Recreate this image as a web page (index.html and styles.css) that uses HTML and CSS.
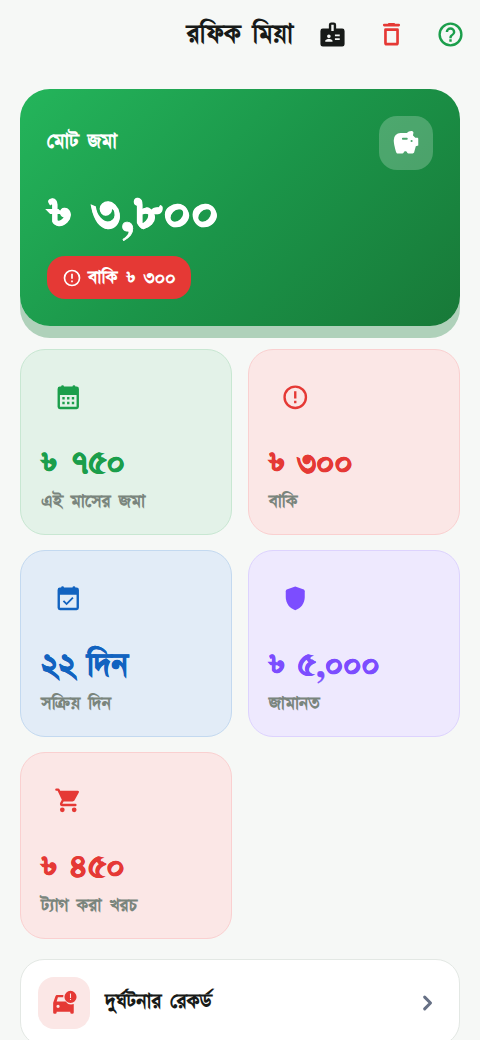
FILE: index.html
```html
<!DOCTYPE html>
<html lang="bn">
<head>
<meta charset="utf-8">
<title>রফিক মিয়া</title>
<link rel="stylesheet" href="styles.css">
</head>
<body>
<header class="topbar">
  <h1 class="name">রফিক মিয়া</h1>
  <svg class="icon badge-icon" viewBox="0 0 24 24" fill="#171a18"><path fill-rule="evenodd" d="M20 7h-5V4a2 2 0 0 0-2-2h-2a2 2 0 0 0-2 2v3H4a2 2 0 0 0-2 2v11a2 2 0 0 0 2 2h16a2 2 0 0 0 2-2V9a2 2 0 0 0-2-2zM11 4h2v5h-2zM9 12a1.500 1.500 0 1 1 0 3 1.500 1.500 0 0 1 0-3zM12 18H6v-.75c0-1 2-1.500 3-1.500s3 .5 3 1.500zM18 16.500h-4V15h4zM18 13.500h-4V12h4z"/></svg>
  <svg class="icon" viewBox="0 0 24 24" fill="none" stroke="#e53935" stroke-width="2.200" stroke-linejoin="round" stroke-linecap="round"><path d="M7 8h10v11a1 1 0 0 1-1 1H8a1 1 0 0 1-1-1z"/><path d="M6 4.200h12M10 3.600h4"/></svg>
  <svg class="icon" viewBox="0 0 24 24" fill="#1b9e4b"><path d="M11 18h2v-2h-2v2zm1-16a10 10 0 1 0 0 20 10 10 0 0 0 0-20zm0 18a8 8 0 1 1 0-16 8 8 0 0 1 0 16zm0-14a4 4 0 0 0-4 4h2a2 2 0 1 1 4 0c0 2-3 1.750-3 5h2c0-2.250 3-2.500 3-5a4 4 0 0 0-4-4z"/></svg>
</header>
<main>
  <section class="hero">
    <div class="hero-head">
      <span class="hero-label">মোট জমা</span>
      <span class="hero-icon"><svg viewBox="0 0 24 24" fill="#fff"><path fill-rule="evenodd" d="M22 7.500h-2L18 5.500c0-.5.100-1 .200-1.500A1.500 1.500 0 0 0 16.500 1.800 5 5 0 0 0 12.700 3.500H7.500A5.800 5.800 0 0 0 1.500 9.600c0 3.400 1.500 8.300 2.100 10.300.2.700.7 1.100 1.400 1.100h4a1.300 1.300 0 0 0 1.200-1.200l.8-.8h1l.8.8a1.300 1.300 0 0 0 1.200 1.200h3.700c.6 0 1.100-.4 1.300-1l1.400-5.200 2.100-.7V8.500a1 1 0 0 0-.5-1zM12.700 9.200H9.300a.8.800 0 0 1 0-1.600h3.400a.8.800 0 0 1 0 1.600zm4.100 2a.9.900 0 1 1 0-1.800.9.900 0 0 1 0 1.800z"/></svg></span>
    </div>
    <div class="hero-amount">৳ ৩,৮০০</div>
    <div class="due"><svg viewBox="0 0 24 24" fill="#fff"><path d="M11 15h2v2h-2zm0-8h2v6h-2zm1-5a10 10 0 1 0 0 20 10 10 0 0 0 0-20zm0 18a8 8 0 1 1 0-16 8 8 0 0 1 0 16z"/></svg><span>বাকি ৳ ৩০০</span></div>
  </section>
  <section class="grid">
    <article class="card green">
      <svg class="icon" viewBox="0 0 24 24" fill="currentColor"><path fill-rule="evenodd" d="M19 3h-1a1.200 1.200 0 0 0-2.400 0H8.400A1.200 1.200 0 0 0 6 3H5a2 2 0 0 0-2 2v15a2 2 0 0 0 2 2h14a2 2 0 0 0 2-2V5a2 2 0 0 0-2-2zm0 17H5V10h14zM7 11.800h2v2H7zm4 0h2v2h-2zm4 0h2v2h-2zm-8 4h2v2H7zm4 0h2v2h-2zm4 0h2v2h-2z"/></svg>
      <strong class="amount">৳ ৭৫০</strong><span>এই মাসের জমা</span>
    </article>
    <article class="card red">
      <svg class="icon" viewBox="0 0 24 24" fill="currentColor"><path d="M11 15h2v2h-2zm0-8h2v6h-2zm1-5a10 10 0 1 0 0 20 10 10 0 0 0 0-20zm0 18a8 8 0 1 1 0-16 8 8 0 0 1 0 16z"/></svg>
      <strong class="amount">৳ ৩০০</strong><span>বাকি</span>
    </article>
    <article class="card blue">
      <svg class="icon" viewBox="0 0 24 24" fill="currentColor"><path fill-rule="evenodd" d="M19 3h-1a1.200 1.200 0 0 0-2.400 0H8.400A1.200 1.200 0 0 0 6 3H5a2 2 0 0 0-2 2v15a2 2 0 0 0 2 2h14a2 2 0 0 0 2-2V5a2 2 0 0 0-2-2zm0 17H5V9h14zm-8.400-2.100 5.900-5.900-1.100-1.100-4.800 4.800-2.100-2.100-1.100 1.100z"/></svg>
      <strong>২২ দিন</strong><span>সক্রিয় দিন</span>
    </article>
    <article class="card purple">
      <svg class="icon" viewBox="0 0 24 24" fill="currentColor"><path d="M12 2 4.800 4.600Q4 5 4 6v5c0 5.500 3.400 9.700 8 11 4.600-1.300 8-5.500 8-11V6q0-1-.8-1.400z"/></svg>
      <strong class="amount">৳ ৫,০০০</strong><span>জামানত</span>
    </article>
    <article class="card red">
      <svg class="icon" viewBox="0 0 24 24" fill="currentColor"><path d="M7 18a2 2 0 1 0 0 4 2 2 0 0 0 0-4zm10 0a2 2 0 1 0 0 4 2 2 0 0 0 0-4zM1 3a1 1 0 0 0 1 1h1l3.600 7.600-1.350 2.400C4.500 15.400 5.500 17 7 17h11a1 1 0 0 0 0-2H7l1.100-2h7.500c.7 0 1.400-.4 1.700-1l3.600-6.500A1 1 0 0 0 20 4H5.200l-.7-1.400A1 1 0 0 0 3.600 2H2a1 1 0 0 0-1 1z"/></svg>
      <strong class="amount">৳ ৪৫০</strong><span>ট্যাগ করা খরচ</span>
    </article>
  </section>
  <section class="record">
    <span class="record-icon"><svg viewBox="0 0 24 24" fill="#e53935"><path fill-rule="evenodd" d="M11.500 4.500H5.800c-.8 0-1.400.5-1.700 1.200L2 11.800v8.900a1.300 1.300 0 0 0 1.300 1.300h.6a1.300 1.300 0 0 0 1.300-1.300V20h12.600v.7a1.300 1.300 0 0 0 1.300 1.300h.6a1.300 1.300 0 0 0 1.300-1.300V13a6.500 6.500 0 0 1-7.500-2.500H5.200l1.200-3.700h4.900c0-.8 0-1.600.2-2.300zM6.500 16.500a1.500 1.500 0 1 1 0-3 1.500 1.500 0 0 1 0 3z"/><path fill-rule="evenodd" d="M18 .8a5.600 5.600 0 1 0 0 11.200A5.600 5.600 0 0 0 18 .8zm-.5 2.500h1v4h-1zm0 5h1v1h-1z"/></svg></span>
    <span class="record-label">দুর্ঘটনার রেকর্ড</span>
    <svg class="chevron" viewBox="0 0 24 24" fill="none" stroke="#667085" stroke-width="2.600" stroke-linecap="round" stroke-linejoin="round"><path d="m10 7 5 5-5 5"/></svg>
  </section>
</main>
</body>
</html>
```
FILE: styles.css
```css
* { box-sizing: border-box; }
body {
  margin: 0;
  height: 1040px;
  overflow: hidden;
  background: #f6f8f6;
  font-family: "FreeSerif", monospace;
  white-space: nowrap;
}
svg { display: block; flex: none; }
.topbar { display: flex; align-items: center; justify-content: flex-end; height: 69px; padding-right: 15px; }
.topbar .icon { width: 29px; height: 29px; margin-left: 30px; }
.topbar .badge-icon { margin-left: 25px; }
.name { margin: 0; font-size: 30px; font-weight: 700; color: #171a18; line-height: 40px; word-spacing: 4px; }
main { padding: 20px 20px 0; }
.hero {
  height: 237px;
  padding: 27px;
  border-radius: 30px;
  background: linear-gradient(135deg, #24b55b, #1b9549 50%, #187938);
  box-shadow: 0 12px 0 #afd1ba;
  color: #fff;
}
.hero-head { display: flex; justify-content: space-between; height: 54px; }
.hero-label { font-size: 23px; font-weight: 700; line-height: 53px; word-spacing: 3px; }
.hero-icon { width: 54px; height: 54px; padding: 13px; border-radius: 18px; background: rgba(255,255,255,.22); }
.hero-icon svg { width: 28px; height: 28px; }
.hero-amount { height: 86px; padding-left: 2px; font-size: 55px; font-weight: 700; line-height: 90px; word-spacing: 8px; letter-spacing: .3px; -webkit-text-stroke: .8px; }
.due { display: inline-flex; align-items: center; gap: 6px; width: 144px; height: 43px; padding: 0 15px; border-radius: 18px; background: #e53935; font-size: 21px; font-weight: 700; word-spacing: 4px; }
.due svg { width: 20px; height: 20px; }
.grid { display: grid; grid-template-columns: 1fr 1fr; grid-auto-rows: 186.500px; gap: 15.300px; margin-top: 22.700px; }
.card { display: flex; flex-direction: column; align-items: flex-start; padding: 33px 20px 0; border: 1px solid; border-radius: 25px; }
.card .icon { width: 28.500px; height: 28.500px; margin-left: 12.500px; }
.card strong { margin-top: 29px; height: 44px; font-size: 36.500px; font-weight: 700; line-height: 48px; word-spacing: 2px; -webkit-text-stroke: .4px; }
.card .amount { padding-left: 1px; word-spacing: 5px; }
.card span { height: 34px; font-size: 20.500px; line-height: 36px; color: #7a857d; font-weight: 700; word-spacing: 3px; }
.green { color: #1b9e4b; background: #e3f2e8; border-color: #c8e7d2; }
.red { color: #e53935; background: #fbe7e6; border-color: #fad0d0; }
.blue { color: #1263c0; background: #e2ecf7; border-color: #c3d9f0; }
.purple { color: #7c4dff; background: #eee9fe; border-color: #ddd3fe; }
.record { display: flex; align-items: center; height: 87px; margin-top: 20.500px; padding: 0 18px 0 17px; border: 1px solid #e3e8e4; border-radius: 24px; background: #fff; }
.record-icon { width: 52px; height: 52px; padding: 13px; border-radius: 16px; background: #fbe7e6; }
.record-icon svg { width: 26px; height: 26px; }
.record-label { margin-left: 15px; font-size: 23px; font-weight: 700; color: #171a18; word-spacing: 3px; }
.chevron { width: 28px; height: 28px; margin-left: auto; }
```
